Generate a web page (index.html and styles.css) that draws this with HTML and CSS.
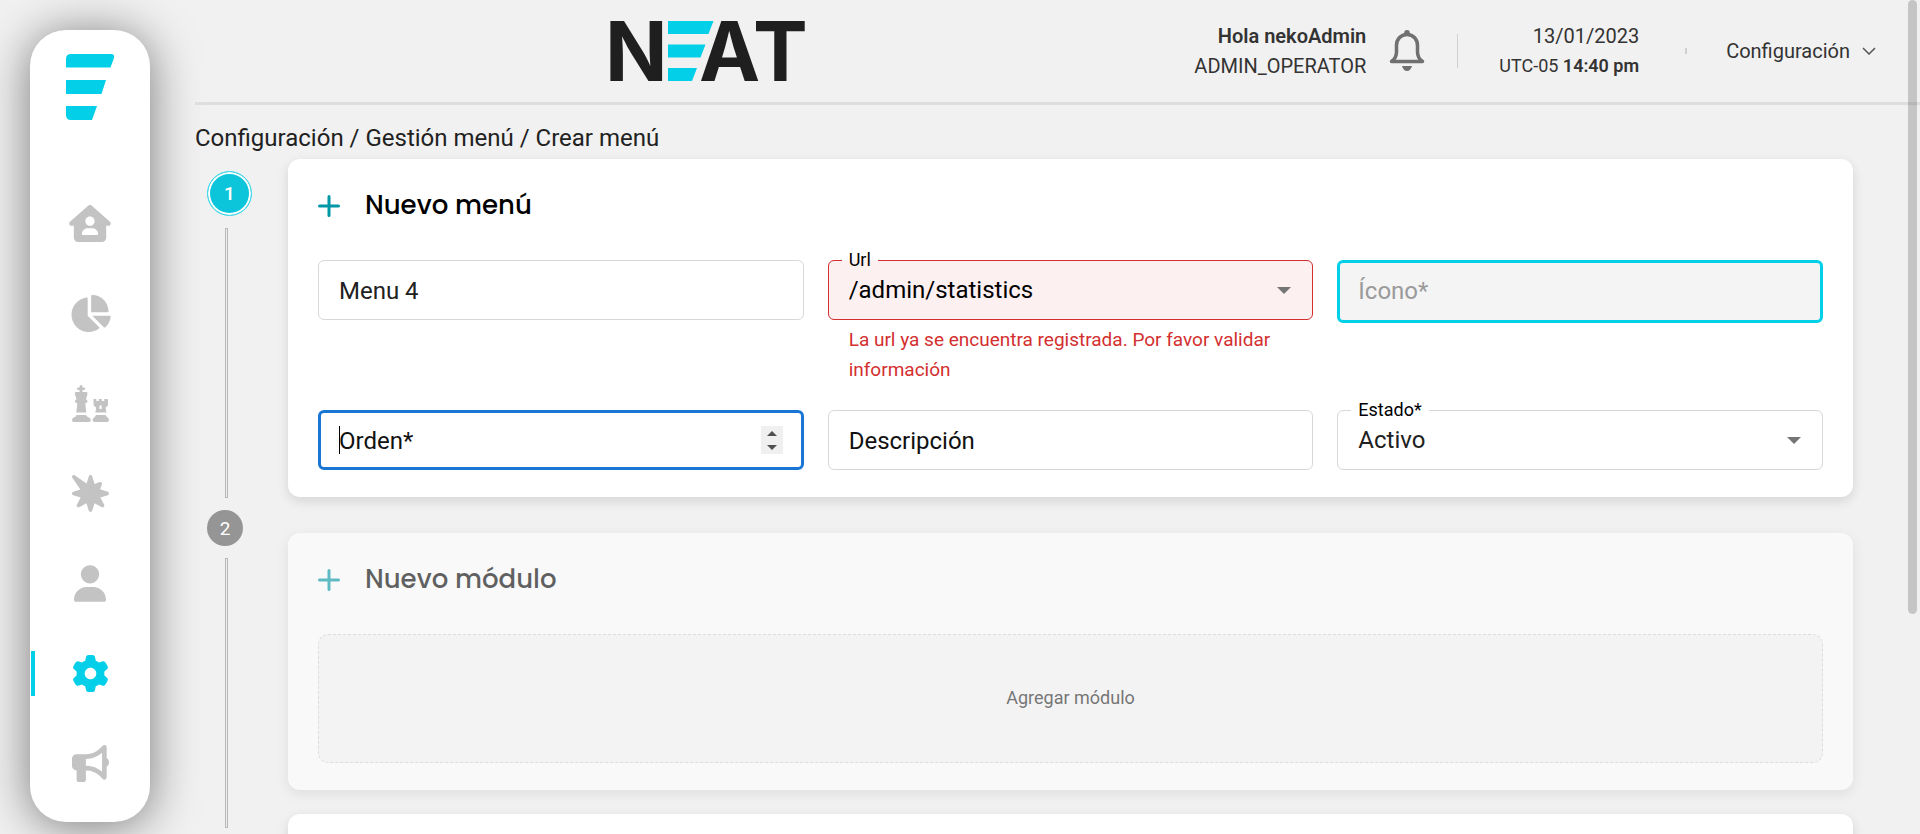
FILE: index.html
```html
<!DOCTYPE html>
<html lang="es">
<head>
<meta charset="utf-8">
<meta name="viewport" content="width=device-width, initial-scale=1">
<title>NEAT - Crear menú</title>
<link rel="stylesheet" href="styles.css">
</head>
<body>
<aside class="sidebar">
  <a class="sidebar-logo" href="#" aria-label="NEAT">
    <svg width="49" height="66" viewBox="0 0 49 66"><path d="M5 0H45Q49 0 48 4L44.500 13.500H0V5Q0 0 5 0zM0 26H40L35.500 40H0zM0 52H31L26 66H5Q0 66 0 61z"/></svg>
  </a>
  <nav class="sidebar-nav" aria-label="Principal">
    <a class="nav-link" href="#" aria-label="Inicio"><svg width="42" height="37" viewBox="0 0 576 512"><path d="M575.8 255.5c0 18-15 32.1-32 32.1h-32l.7 160.2c.2 35.500-28.500 64.300-64 64.300H128.100c-35.300 0-64-28.700-64-64V287.600H32c-18 0-32-14-32-32.100c0-9 3-17 10-24L266.400 8c7-7 15-8 22-8s15 2 21 7L564.800 231.500c8 7 12 15 11 24zM352 224c0-35.300-28.700-64-64-64s-64 28.700-64 64s28.700 64 64 64s64-28.700 64-64zm-96 96c-44.200 0-80 35.800-80 80c0 8.800 7.200 16 16 16H384c8.800 0 16-7.200 16-16c0-44.200-35.800-80-80-80H256z"/></svg></a>
    <a class="nav-link" href="#" aria-label="Estadísticas"><svg width="42" height="37" viewBox="0 0 576 512"><path d="M304 240V16.600c0-9 7-16.600 16-16.600C443.700 0 544 100.300 544 224c0 9-7.600 16-16.600 16H304zM32 272C32 150.700 122.100 50.300 239 34.300c9.200-1.300 17 6.100 17 15.400V288L412.500 444.500c6.700 6.700 6.200 17.700-1.500 23.100C371.800 495.600 323.800 512 272 512C139.500 512 32 404.600 32 272zm526.400 16c9.300 0 16.600 7.800 15.400 17c-7.700 55.900-34.600 105.600-73.900 142.300c-6 5.600-15.400 5.200-21.200-.7L320 288H558.400z"/></svg></a>
    <a class="nav-link" href="#" aria-label="Juegos"><svg width="37" height="37" viewBox="0 0 37 37"><path d="M7.500 1.500a1.500 1.500 0 0 1 3 0V2.500h1.300a1.200 1.200 0 0 1 0 2.600H10.500V7H14q2 0 1.500 1.800L14 14.500q1.500.3 1.500 1.800t-1.500 1.700h-.6q.1 5 1 9.500H4.200q.9-4.500 1-9.500H4.600Q3 17.800 3 16.300t1.500-1.800L2.800 8.800Q2.400 7 4.200 7H7.500V5.100H6.300a1.200 1.200 0 0 1 0-2.600H7.500zM4.500 30h9.500l1 1.500 2.800 1.500q1 1 1 2.200 0 1.800-1.800 1.800H1.700Q0 37 0 35.200 0 34 1 33l2.700-1.500zM21.500 14h2.800v2h2.500v-2h3v2h2.500v-2h3q.7 0 .7.700v5q0 .8-.6 1.300L33.700 22.500q.1 2.800.8 5H23.300q.7-2.200.8-5L22.200 21q-.6-.5-.6-1.300zM27.500 21.500V24h2.200v-2.500q0-1.300-1.100-1.300t-1.100 1.300zM24 30h9.500l1 1.500 1.600 1.500q.9 1 .9 2.200 0 1.800-1.800 1.800H22.400q-1.800 0-1.800-1.800 0-1.200.9-2.200l1.700-1.500z"/></svg></a>
    <a class="nav-link" href="#" aria-label="Promociones"><svg width="37" height="37" viewBox="0 0 512 512"><path d="M37.600 4.200C28-2.300 15.200-1.100 7 7s-9.400 21-2.800 30.500l112 163.300L16.600 233.200C6.700 236.400 0 245.600 0 256s6.700 19.600 16.600 22.800l103.100 33.400L66.800 412.800c-4.900 9.300-3.200 20.700 4.300 28.100s18.800 9.200 28.100 4.300l100.600-52.900 33.400 103.100c3.200 9.900 12.400 16.600 22.800 16.600s19.600-6.700 22.800-16.600l33.400-103.100 100.600 52.900c9.300 4.900 20.700 3.200 28.100-4.300s9.200-18.800 4.300-28.100L392.300 312.200l103.100-33.400c9.900-3.200 16.600-12.400 16.600-22.800s-6.700-19.600-16.600-22.800L388.900 198.700l25.700-70.400c3.200-8.800 1-18.600-5.600-25.200s-16.400-8.800-25.200-5.600l-70.400 25.700L278.800 16.600C275.600 6.700 266.400 0 256 0s-19.600 6.700-22.800 16.600l-32.300 99.600L37.600 4.200z"/></svg></a>
    <a class="nav-link" href="#" aria-label="Usuarios"><svg width="32" height="37" viewBox="0 0 448 512"><path d="M224 256c70.700 0 128-57.300 128-128S294.700 0 224 0S96 57.300 96 128s57.300 128 128 128zm-45.700 48C79.800 304 0 383.800 0 482.300C0 498.700 13.300 512 29.700 512H418.300c16.400 0 29.700-13.300 29.700-29.700C448 383.800 368.200 304 269.700 304H178.300z"/></svg></a>
    <a class="nav-link nav-link-active" href="#" aria-label="Configuración" aria-current="page"><svg width="37" height="37" viewBox="0 0 512 512"><path d="M495.900 166.600c3.200 8.700 .5 18.400-6.400 24.600l-43.300 39.400c1.100 8.300 1.700 16.800 1.700 25.400s-.6 17.100-1.700 25.400l43.300 39.400c6.900 6.200 9.600 15.900 6.400 24.600c-4.400 11.900-9.700 23.300-15.800 34.300l-4.700 8.100c-6.600 11-14 21.400-22.100 31.200c-5.900 7.200-15.700 9.600-24.500 6.800l-55.700-17.700c-13.400 10.300-28.200 18.900-44 25.400l-12.500 57.100c-2 9.100-9 16.300-18.200 17.800c-13.800 2.300-28 3.500-42.500 3.500s-28.700-1.200-42.500-3.500c-9.200-1.500-16.200-8.700-18.200-17.800l-12.500-57.100c-15.800-6.500-30.600-15.100-44-25.400L83.100 425.900c-8.800 2.800-18.600 .3-24.500-6.800c-8.100-9.800-15.500-20.200-22.100-31.200l-4.700-8.100c-6.100-11-11.400-22.400-15.800-34.300c-3.200-8.700-.5-18.400 6.400-24.600l43.300-39.400C64.600 273.100 64 264.600 64 256s.6-17.100 1.700-25.400L22.400 191.200c-6.900-6.200-9.600-15.900-6.400-24.600c4.400-11.900 9.700-23.300 15.800-34.300l4.700-8.100c6.600-11 14-21.400 22.100-31.200c5.900-7.200 15.700-9.600 24.500-6.800l55.700 17.700c13.400-10.300 28.200-18.900 44-25.400l12.500-57.100c2-9.100 9-16.300 18.200-17.800C227.300 1.200 241.500 0 256 0s28.700 1.200 42.500 3.500c9.200 1.500 16.200 8.700 18.200 17.800l12.500 57.100c15.800 6.500 30.600 15.100 44 25.400l55.700-17.700c8.800-2.800 18.600-.3 24.500 6.800c8.100 9.800 15.500 20.200 22.100 31.200l4.700 8.100c6.100 11 11.400 22.400 15.800 34.300zM256 336c44.200 0 80-35.800 80-80s-35.800-80-80-80s-80 35.800-80 80s35.800 80 80 80z"/></svg></a>
    <a class="nav-link" href="#" aria-label="Anuncios"><svg width="37" height="37" viewBox="0 0 512 512"><path d="M480 32c0-12.900-7.800-24.600-19.800-29.600s-25.700-2.200-34.900 6.900L381.700 53c-48 48-113.100 75-181 75H64c-35.300 0-64 28.700-64 64v96c0 35.300 28.700 64 64 64l0 128c0 17.700 14.300 32 32 32h64c17.700 0 32-14.300 32-32V352l8.700 0c67.900 0 133 27 181 75l43.600 43.600c9.200 9.200 22.900 11.900 34.900 6.900s19.800-16.600 19.800-29.600V300.400c18.600-8.800 32-32.500 32-60.400s-13.400-51.600-32-60.400V32zm-64 76.700V371.300C357.200 317.800 280.500 288 200.700 288H192V192h8.700c79.800 0 156.500-29.800 215.300-83.300z"/></svg></a>
  </nav>
</aside>

<div class="page">
  <header class="topbar">
    <svg class="brand" width="194" height="60" viewBox="0 0 194 60" role="img" aria-label="NEAT">
      <path class="brand-bars" d="M59 0H104.500L99.500 13H59zM59 23.500H96.500L91.500 36.500H59zM59 47H88L83 60H59z"/>
      <text class="brand-letter" x="-4" y="60">N</text>
      <text class="brand-letter" x="90" y="60">AT</text>
    </svg>
    <div class="topbar-right">
      <div class="topbar-text">
        <strong>Hola nekoAdmin</strong>
        <span>ADMIN_OPERATOR</span>
      </div>
      <button class="bell" type="button" aria-label="Notificaciones">
        <svg width="36" height="42" viewBox="0 0 36 42"><path class="bell-line" d="M18 4.500C11.500 4.500 7.500 9.500 7.500 15.500V22Q7.500 28 2.500 31.500H33.500Q28.500 28 28.500 22V15.500C28.500 9.500 24.500 4.500 18 4.500z"/><circle cx="18" cy="2.800" r="2.800"/><path d="M13 36H23Q21.500 41 18 41T13 36z"/></svg>
      </button>
      <span class="divider"></span>
      <div class="topbar-text topbar-date">
        <span>13/01/2023</span>
        <span class="topbar-time">UTC-05 <b>14:40 pm</b></span>
      </div>
      <span class="divider divider-short"></span>
      <button class="config" type="button">Configuración
        <svg width="14" height="8" viewBox="0 0 14 8"><path d="M1 1L7 7L13 1"/></svg>
      </button>
    </div>
  </header>

  <nav class="breadcrumb" aria-label="Ruta">Configuración / Gestión menú / Crear menú</nav>

  <main class="content">
    <div class="steps">
      <span class="step step-active">1</span>
      <span class="step-line"></span>
      <span class="step">2</span>
      <span class="step-line"></span>
    </div>

    <div class="cards">
      <section class="card">
        <h2 class="card-title"><svg width="22" height="22" viewBox="0 0 22 22"><path d="M11 1.500V20.500M1.500 11H20.500"/></svg>Nuevo menú</h2>
        <form class="fields">
          <div class="field">
            <input class="control" type="text" value="Menu 4" aria-label="Nombre">
          </div>
          <div class="field">
            <fieldset class="outline outline-error">
              <legend><label for="url">Url</label></legend>
              <select id="url" aria-invalid="true" aria-describedby="url-error"><option>/admin/statistics</option></select>
              <svg class="caret" width="14" height="7" viewBox="0 0 14 7"><path d="M0 0H14L7 7z"/></svg>
            </fieldset>
            <p class="error" id="url-error">La url ya se encuentra registrada. Por favor validar información</p>
          </div>
          <div class="field">
            <input class="control control-icon" type="text" placeholder="Ícono*" aria-label="Ícono">
          </div>
          <div class="field field-number">
            <input class="control control-focus" type="number" placeholder="Orden*" aria-label="Orden">
            <span class="text-cursor"></span>
            <span class="spinner">
              <button type="button" aria-label="Aumentar"><svg width="10" height="5" viewBox="0 0 10 5"><path d="M5 0L10 5H0z"/></svg></button>
              <button type="button" aria-label="Disminuir"><svg width="10" height="5" viewBox="0 0 10 5"><path d="M0 0H10L5 5z"/></svg></button>
            </span>
          </div>
          <div class="field">
            <input class="control" type="text" placeholder="Descripción" aria-label="Descripción">
          </div>
          <div class="field">
            <fieldset class="outline">
              <legend><label for="estado">Estado*</label></legend>
              <select id="estado"><option>Activo</option></select>
              <svg class="caret" width="14" height="7" viewBox="0 0 14 7"><path d="M0 0H14L7 7z"/></svg>
            </fieldset>
          </div>
        </form>
      </section>

      <section class="card card-muted">
        <h2 class="card-title"><svg width="22" height="22" viewBox="0 0 22 22"><path d="M11 1.500V20.500M1.500 11H20.500"/></svg>Nuevo módulo</h2>
        <button class="add-module" type="button">Agregar módulo</button>
      </section>

      <section class="card card-next"></section>
    </div>
  </main>
</div>
<div class="scroll-thumb"></div>
</body>
</html>
```
FILE: styles.css
```css
* {
  box-sizing: border-box;
}

body {
  margin: 0;
  height: 100vh;
  display: flex;
  overflow: hidden;
  background: #f1f1f1;
  color: #212121;
  font-family: Roboto, "Liberation Sans", sans-serif;
  font-size: 24px;
}

button,
input,
select {
  font: inherit;
  color: inherit;
}

button {
  padding: 0;
  border: 0;
  background: none;
}

svg {
  display: block;
  flex: none;
}

/* Sidebar */
.sidebar {
  flex: none;
  width: 120px;
  margin: 30px 45px 12px 30px;
  padding-top: 24px;
  border-radius: 36px;
  background: #fff;
  box-shadow: 0 4px 48px rgba(0, 0, 0, 0.5);
}

.sidebar-logo {
  display: block;
  margin-left: 36px;
  fill: #03d0e8;
}

.sidebar-nav {
  display: flex;
  flex-direction: column;
  gap: 45px;
  margin-top: 81px;
}

.nav-link {
  display: flex;
  align-items: center;
  justify-content: center;
  height: 45px;
  margin: 0 1px;
  border: 0 solid transparent;
  border-width: 0 4px;
  fill: #c3c3c3;
}

.nav-link-active {
  border-left-color: #03d0e8;
  fill: #03d0e8;
}

/* Top bar */
.page {
  flex: 1;
  min-width: 0;
  display: flex;
  flex-direction: column;
}

.topbar {
  flex: none;
  display: flex;
  align-items: center;
  justify-content: space-between;
  height: 105px;
  padding: 0 44px 0 24%;
  border-bottom: 3px solid #dedede;
}

.brand {
  overflow: visible;
}

.brand-bars {
  fill: #03d0e8;
}

.brand-letter {
  fill: #1f1f1f;
  font-family: Inter, sans-serif;
  font-size: 82px;
  font-weight: 700;
}

.topbar-right {
  display: flex;
  align-items: center;
  color: #333;
  font-size: 20px;
}

.topbar-text {
  display: flex;
  flex-direction: column;
  text-align: right;
  line-height: 30px;
}

.topbar-text strong,
.topbar-text b {
  font-weight: 600;
}

.topbar-time {
  font-size: 18px;
}

.bell {
  margin: 0 32px 0 23px;
  fill: #707070;
}

.bell-line {
  fill: none;
  stroke: #707070;
  stroke-width: 3.5;
  stroke-linejoin: round;
}

.divider {
  width: 1px;
  height: 34px;
  margin-right: 41px;
  background: #d0d0d0;
}

.divider-short {
  width: 2px;
  height: 6px;
  margin: 0 39px 0 46px;
}

.config {
  display: flex;
  align-items: center;
  gap: 12px;
}

.config path {
  fill: none;
  stroke: #555;
  stroke-width: 1.5;
}

.breadcrumb {
  margin: 16px 0 4px;
  line-height: 34px;
}

/* Steps */
.content {
  flex: 1;
  min-height: 0;
  display: flex;
}

.steps {
  flex: none;
  display: flex;
  flex-direction: column;
  gap: 12px;
  width: 93px;
  padding: 12px 0 0 12px;
}

.step {
  flex: none;
  display: flex;
  align-items: center;
  justify-content: center;
  width: 36px;
  height: 36px;
  border-radius: 50%;
  background: #959595;
  color: #fff;
  font-size: 19px;
}

.step-active {
  width: 45px;
  height: 45px;
  border: 1px solid #3fd9ea;
  box-shadow: inset 0 0 0 2px #fff;
  background: #0dc5da;
  font-weight: 500;
}

.step-line {
  flex: none;
  width: 3px;
  height: 270px;
  margin-left: 18px;
  border: 1px solid #b8b8b8;
  background: #eee;
}

/* Cards */
.cards {
  flex: 1;
  min-width: 0;
  margin-right: 67px;
}

.card {
  padding: 28px 30px 27px;
  border-radius: 12px;
  background: #fff;
  box-shadow: 0 4px 12px rgba(0, 0, 0, 0.12);
}

.card-muted {
  margin: 36px 0 24px;
  opacity: 0.6;
}

.card-next {
  height: 257px;
}

.card-title {
  display: flex;
  align-items: center;
  gap: 25px;
  margin: 0 0 36px;
  color: #000;
  font-family: Poppins, Inter, sans-serif;
  font-size: 26px;
  font-weight: 500;
  line-height: 37px;
}

.card-title path {
  fill: none;
  stroke: #0097a7;
  stroke-width: 3;
  stroke-linecap: round;
}

.fields {
  display: grid;
  grid-template-columns: repeat(3, minmax(0, 1fr));
  align-items: start;
  gap: 25px 24px;
}

.field {
  position: relative;
}

.control {
  display: block;
  width: 100%;
  height: 60px;
  padding: 1px 20px 0;
  border: 1px solid #d8d8d8;
  border-radius: 6px;
  outline: 0;
  background: #fff;
  appearance: textfield;
}

.control::placeholder {
  color: #111;
  opacity: 1;
}

.control-icon {
  height: 63px;
  padding: 0 18px 2px;
  border: 3px solid #03d0e8;
  background: #f4f4f4;
}

.control-icon::placeholder {
  color: #9a9a9a;
}

.control-focus {
  padding: 1px 18px 0;
  border: 3px solid #1976d2;
}

.control::-webkit-inner-spin-button {
  display: none;
}

.text-cursor {
  position: absolute;
  top: 16px;
  left: 21px;
  width: 1px;
  height: 28px;
  background: #000;
}

.spinner {
  position: absolute;
  top: 16px;
  right: 21px;
  display: flex;
  flex-direction: column;
  width: 22px;
  height: 28px;
  background: #f0f0f0;
  fill: #505050;
}

.spinner button {
  flex: 1;
  display: flex;
  align-items: center;
  justify-content: center;
}

.outline {
  position: relative;
  min-width: 0;
  height: 60px;
  margin: 0;
  padding: 0;
  border: 1px solid #d8d8d8;
  border-radius: 6px;
  color: #212121;
}

.outline-error {
  border-color: #d32f2f;
  background: #fcf0f0;
  color: #000;
}

.outline legend {
  height: 1px;
  margin-left: 13px;
  padding: 0 7px;
  color: #000;
  font-size: 18px;
  line-height: 0;
}

.outline select {
  display: block;
  width: 100%;
  height: 58px;
  padding: 0 20px;
  border: 0;
  outline: 0;
  background: transparent;
  appearance: none;
}

.caret {
  position: absolute;
  top: 26px;
  right: 21px;
  fill: #757575;
  pointer-events: none;
}

.error {
  margin: 5px 21px 0;
  color: #d32f2f;
  font-size: 19px;
  line-height: 30px;
}

.add-module {
  width: 100%;
  height: 129px;
  padding-bottom: 2px;
  border: 1px dashed #d0d0d0;
  border-radius: 10px;
  background: #f5f5f5;
  color: #232323;
  font-size: 18px;
}

.scroll-thumb {
  position: fixed;
  top: 0;
  right: 3px;
  width: 9px;
  height: 614px;
  border-radius: 5px;
  background: rgba(0, 0, 0, 0.18);
}
```
